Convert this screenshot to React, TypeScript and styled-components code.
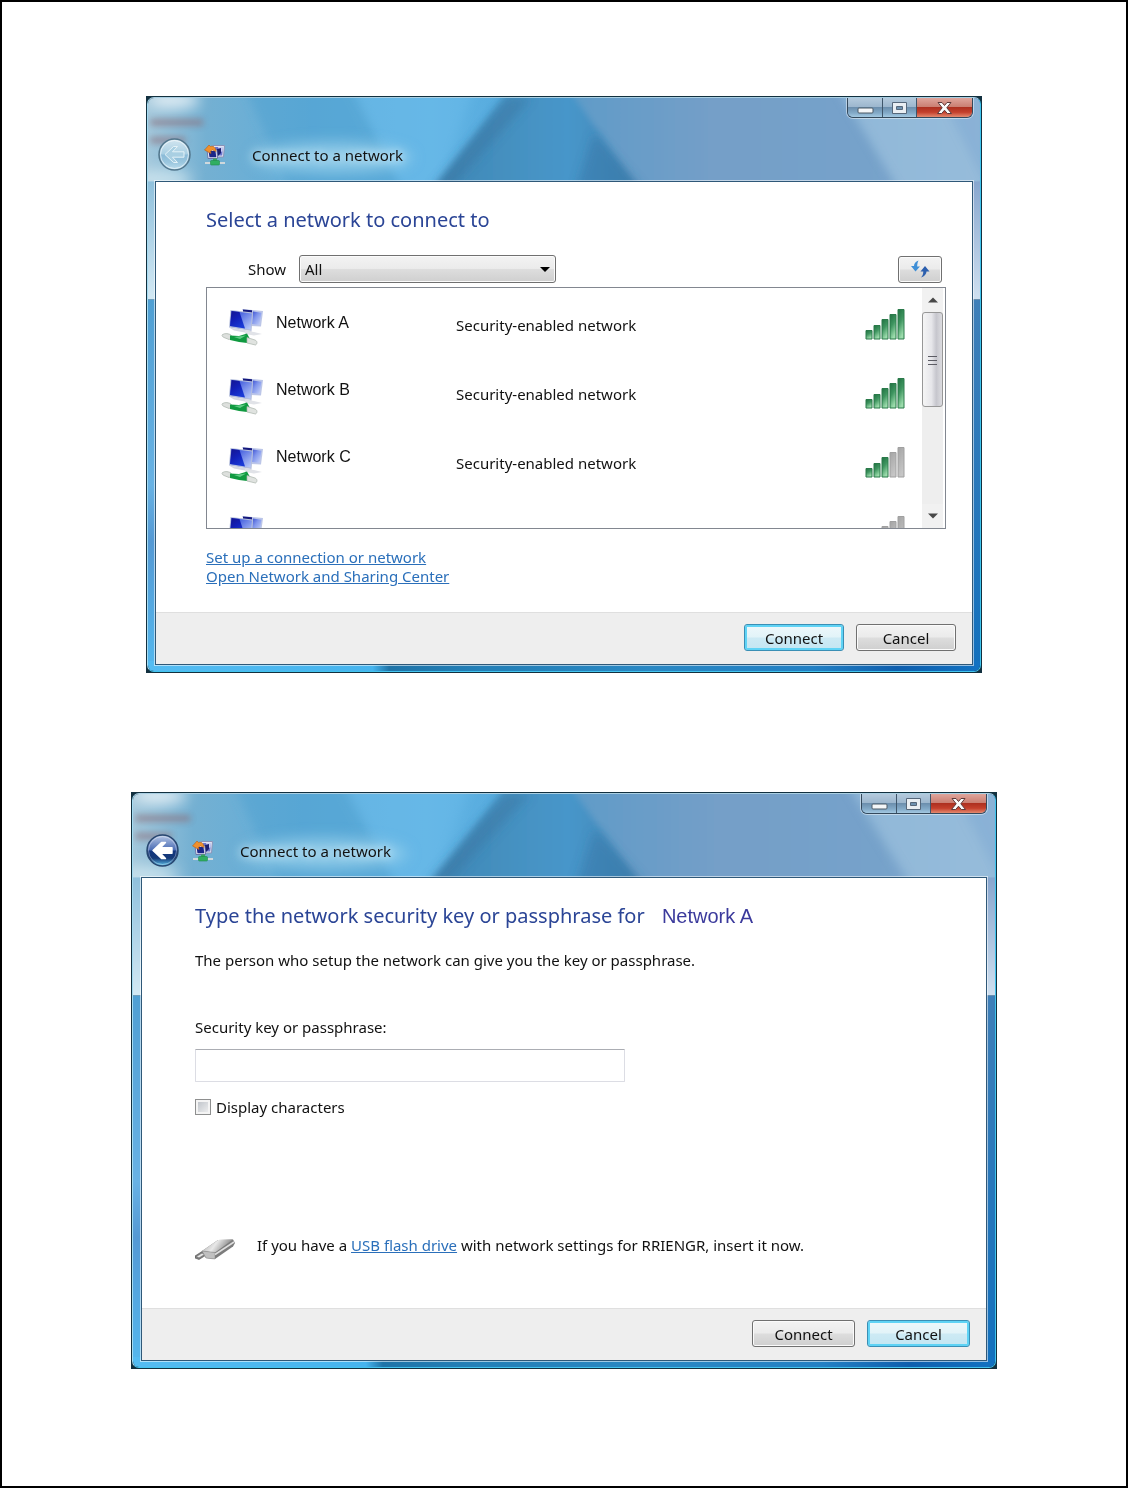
import React, { useState } from "react";
import styled, { createGlobalStyle, css } from "styled-components";

const GlobalStyle = createGlobalStyle`
  *, *::before, *::after { box-sizing: border-box; }
  body { margin: 0; background: #fff; }
`;

const uiFont = `"Noto Sans", "Open Sans", sans-serif`;
const plainFont = `"Liberation Sans", Arial, sans-serif`;

const Page = styled.main`
  min-height: 100vh;
  padding: 94px 24px;
  border: 2px solid #000;
  display: flex;
  flex-direction: column;
  align-items: center;
  gap: 119px;
  font-family: ${uiFont};
  font-size: 15px;
  line-height: 20px;
  color: #111;
`;

/* ---------- window chrome ---------- */

const Frame = styled.section<{ $width: number }>`
  width: 100%;
  max-width: ${(p) => p.$width}px;
  padding: 1px;
  background: #12303f;
`;

const Glass = styled.div<{ $side: number }>`
  position: relative;
  isolation: isolate;
  overflow: hidden;
  border: 1px solid;
  border-color: #a9cfe2 #3ec4ee #43c3ee #a5dcf2;
  border-radius: 7px;
  padding: 0 ${(p) => p.$side}px 6px;
`;

const Art = styled.svg`
  position: absolute;
  inset: 0;
  width: 100%;
  height: 100%;
  z-index: -1;
`;

const Caption = styled.div`
  display: flex;
  justify-content: flex-end;
  height: 20px;
`;

const CaptionGroup = styled.div`
  display: flex;
  border: 1px solid #34495c;
  border-top: 0;
  border-radius: 0 0 6px 6px;
  overflow: hidden;
  box-shadow: 0 0 0 1px rgba(255, 255, 255, 0.45);
`;

const CaptionButton = styled.button<{ $close?: boolean }>`
  display: grid;
  place-items: center;
  width: ${(p) => (p.$close ? 56 : 34)}px;
  padding: 0;
  border: 0;
  border-left: 1px solid #3f566b;
  background: linear-gradient(#b4cadd 0, #9db7ce 45%, #6c8fae 50%, #84abc9 80%, #a4c9e2 100%);
  &:first-child { border-left: 0; }
  ${(p) =>
    p.$close &&
    css`
      background: linear-gradient(#dfa59c 0, #cb8073 45%, #ae3020 50%, #c4402c 75%, #e48a70 100%);
    `}
`;

const NavRow = styled.div<{ $left: number }>`
  display: flex;
  align-items: center;
  padding: 20px 0 10px ${(p) => p.$left}px;
`;

const BackButton = styled.button`
  display: block;
  width: 33px;
  height: 33px;
  padding: 0;
  border: 0;
  border-radius: 50%;
  background: none;
  svg { display: block; }
`;

const AppIcon = styled.svg`
  margin: 0 26px 0 13px;
`;

const Title = styled.h1`
  margin: 0;
  font-size: 15px;
  font-weight: 400;
  line-height: 20px;
  text-shadow: 0 0 8px rgba(255, 255, 255, 0.7), 0 0 12px rgba(255, 255, 255, 0.5);
`;

const Client = styled.div`
  display: flex;
  flex-direction: column;
  height: 484px;
  background: #fff;
  border: 1px solid #2f5878;
  box-shadow: 0 0 0 1px rgba(255, 255, 255, 0.55);
`;

const Content = styled.div<{ $left: number; $right: number }>`
  flex: 1;
  padding: 24px ${(p) => p.$right}px 0 ${(p) => p.$left}px;
`;

const Footer = styled.footer`
  display: flex;
  align-items: center;
  justify-content: flex-end;
  gap: 12px;
  height: 52px;
  padding: 0 16px 2px 0;
  background: #eee;
  border-top: 1px solid #dfdfdf;
`;

const Heading = styled.h2`
  margin: 0;
  font-size: 20px;
  font-weight: 400;
  line-height: 28px;
  color: #2b4596;
`;

const buttonFace = css`
  border: 1px solid #707070;
  border-radius: 3px;
  background: linear-gradient(#f3f3f3 0, #ebebeb 48%, #dddddd 52%, #cfcfcf 100%);
  box-shadow: inset 0 0 0 1px #fbfbfb;
`;

const PushButton = styled.button<{ $default?: boolean; $width: number }>`
  width: ${(p) => p.$width}px;
  height: 27px;
  padding: 0;
  font: inherit;
  color: #111;
  ${buttonFace}
  ${(p) =>
    p.$default &&
    css`
      border-color: #3a8fb5;
      background: linear-gradient(#eef8fb 0, #e2f3f8 48%, #cdeaf4 52%, #c3e6f2 100%);
      box-shadow: inset 0 0 0 2px #5fd3f5;
    `}
`;

const Link = styled.a`
  color: #2a6fba;
  text-decoration: underline;
`;

/* ---------- network list ---------- */

const Toolbar = styled.div`
  display: flex;
  align-items: center;
  padding: 21px 4px 4px 42px;
`;

const ShowLabel = styled.label`
  width: 39px;
`;

const SelectWrap = styled.span`
  position: relative;
  width: 257px;
  margin-left: 12px;
  &::after {
    content: "";
    position: absolute;
    right: 6px;
    top: 12px;
    border: 5px solid transparent;
    border-top-color: #000;
    border-bottom: 0;
    pointer-events: none;
  }
`;

const Select = styled.select`
  display: block;
  appearance: none;
  width: 100%;
  height: 28px;
  padding: 0 5px;
  font: inherit;
  color: #111;
  ${buttonFace}
`;

const RefreshButton = styled.button`
  display: grid;
  place-items: center;
  width: 44px;
  height: 27px;
  margin-left: auto;
  padding: 0;
  ${buttonFace}
`;

const ListBox = styled.div`
  display: flex;
  height: 242px;
  overflow: hidden;
  border: 1px solid #828790;
`;

const Column = styled.ul<{ $pitch: number; $top: number; $width?: number }>`
  display: flex;
  flex-direction: column;
  flex: ${(p) => (p.$width ? `0 0 ${p.$width}px` : "1")};
  margin: 0;
  padding: ${(p) => p.$top}px 0 0;
  list-style: none;
  li {
    flex: 0 0 ${(p) => p.$pitch}px;
  }
  svg { display: block; }
`;

const IconColumn = styled(Column)`
  margin-left: 14px;
`;

const NameColumn = styled(Column)`
  font-family: ${plainFont};
  font-size: 16px;
`;

const ScrollBar = styled.div`
  display: flex;
  flex-direction: column;
  width: 21px;
  margin-right: 2px;
  background: #eeeeee;
`;

const ScrollArrow = styled.button`
  display: grid;
  place-items: center;
  height: 24px;
  padding: 0;
  border: 0;
  background: #f1f1f1;
`;

const ScrollTrack = styled.div`
  flex: 1;
`;

const ScrollThumb = styled.div`
  display: grid;
  place-items: center;
  height: 95px;
  border: 1px solid #979797;
  border-radius: 3px;
  background: linear-gradient(90deg, #f5f5f5 0, #e6e6ea 45%, #c6c6cd 70%, #dcdce0 100%);
`;

const LinkList = styled.nav`
  display: flex;
  flex-direction: column;
  align-items: flex-start;
  padding-top: 19px;
  line-height: 19px;
`;

/* ---------- passphrase form ---------- */

const NetworkName = styled.span`
  margin-left: 12px;
  font-family: ${plainFont};
  color: #3b3a9c;
`;

const Hint = styled.p`
  margin: 20px 0 0;
`;

const Field = styled.div`
  display: flex;
  flex-direction: column;
  gap: 12px;
  max-width: 430px;
  margin-top: 47px;
`;

const TextBox = styled.input`
  width: 100%;
  height: 33px;
  padding: 0 8px;
  font: inherit;
  background: #fff;
  border: 1px solid #dcdde4;
  border-top-color: #abadb3;
  border-radius: 1px;
`;

const CheckRow = styled.label`
  display: flex;
  align-items: center;
  gap: 5px;
  margin-top: 15px;
`;

const CheckBox = styled.input`
  appearance: none;
  width: 16px;
  height: 16px;
  margin: 0;
  border: 1px solid #8e8f8f;
  background: linear-gradient(135deg, #b9bec5, #f4f4f4);
  box-shadow: inset 0 0 0 2px #f4f4f4;
  &:checked { background: #3c6ea8; }
`;

const DriveRow = styled.div`
  display: flex;
  align-items: center;
  gap: 21px;
  margin-top: 112px;
`;

const DriveText = styled.p`
  margin: 0;
`;

/* ---------- drawings ---------- */

function GlassArt({ id }: { id: string }) {
  const u = (n: string) => `url(#${id}-${n})`;
  return (
    <Art viewBox="0 0 836 577" preserveAspectRatio="none" aria-hidden="true">
      <defs>
        <linearGradient id={`${id}-base`}>
          <stop offset="0" stopColor="#a3c8dc" />
          <stop offset="0.07" stopColor="#74b0d2" />
          <stop offset="0.2" stopColor="#5fadda" />
          <stop offset="0.34" stopColor="#62b4e4" />
          <stop offset="0.44" stopColor="#55aadd" />
        </linearGradient>
        <linearGradient id={`${id}-mid`}>
          <stop offset="0" stopColor="#3f86b4" />
          <stop offset="0.4" stopColor="#4591c1" />
          <stop offset="0.65" stopColor="#4796ca" />
          <stop offset="1" stopColor="#4486b2" />
        </linearGradient>
        <linearGradient id={`${id}-right`}>
          <stop offset="0" stopColor="#5f9bc8" />
          <stop offset="0.35" stopColor="#759fc8" />
          <stop offset="0.7" stopColor="#76a2ca" />
          <stop offset="1" stopColor="#86acd0" />
        </linearGradient>
        <linearGradient id={`${id}-left-side`} x2="0" y2="1">
          <stop offset="0" stopColor="#8fc0dc" />
          <stop offset="1" stopColor="#d3e9f4" />
        </linearGradient>
        <linearGradient id={`${id}-right-side`} x2="0" y2="1">
          <stop offset="0" stopColor="#88a6ce" />
          <stop offset="1" stopColor="#cfe0f0" />
        </linearGradient>
        <linearGradient id={`${id}-left-low`} x2="0" y2="1">
          <stop offset="0" stopColor="#4f9fd3" />
          <stop offset="0.5" stopColor="#68b2e4" />
          <stop offset="0.65" stopColor="#5499d4" />
          <stop offset="1" stopColor="#54b8ee" />
        </linearGradient>
        <linearGradient id={`${id}-right-low`} x2="0" y2="1">
          <stop offset="0" stopColor="#3f7fb8" />
          <stop offset="1" stopColor="#1270bd" />
        </linearGradient>
        <linearGradient id={`${id}-bottom`}>
          <stop offset="0" stopColor="#54bcf2" />
          <stop offset="0.27" stopColor="#46b4ee" />
          <stop offset="0.29" stopColor="#1f74a8" />
          <stop offset="0.4" stopColor="#2480b8" />
          <stop offset="0.43" stopColor="#2480b8" />
          <stop offset="0.6" stopColor="#2a88c4" />
          <stop offset="0.8" stopColor="#2380c4" />
          <stop offset="0.9" stopColor="#0f5fae" />
          <stop offset="1" stopColor="#1272c2" />
        </linearGradient>
        <filter id={`${id}-soft`} x="-40%" y="-60%" width="180%" height="220%">
          <feGaussianBlur stdDeviation="7" />
        </filter>
        <filter id={`${id}-smudge`} x="-40%" y="-60%" width="180%" height="220%">
          <feGaussianBlur stdDeviation="3" />
        </filter>
        <filter id={`${id}-haze`} x="-10%" y="-10%" width="120%" height="120%">
          <feGaussianBlur stdDeviation="5" />
        </filter>
        <filter id={`${id}-edge`} x="-5%" y="-5%" width="110%" height="110%">
          <feGaussianBlur stdDeviation="3" />
        </filter>
      </defs>
      <rect width="836" height="90" fill={u("base")} />
      <g filter={u("haze")}>
        <path d="M95 -15H200L262 105H150Z" fill="#4f9fd0" opacity="0.5" />
        <path d="M205 -15H330L285 105H262Z" fill="#6cbcea" opacity="0.45" />
      </g>
      <g filter={u("edge")}>
        <path d="M362 -8H424L498 98H282Z" fill={u("mid")} />
        <path d="M424 -8H850V98H498Z" fill={u("right")} />
      </g>
      <g filter={u("haze")}>
        <path d="M690 -15H870V105H762Z" fill="#a0c4e0" opacity="0.65" />
        <path d="M790 -15H870V105H850Z" fill="#7da7d2" opacity="0.5" />
        <path d="M362 0L285 90H305L385 0Z" fill="#356f9c" opacity="0.4" />
        <path d="M448 35L498 92H430Z" fill="#2f6f9f" opacity="0.4" />
      </g>
      <g filter={u("soft")}>
        <ellipse cx="26" cy="2" rx="26" ry="8" fill="#fff" opacity="0.75" />
        <ellipse cx="185" cy="60" rx="80" ry="16" fill="#a9dcf2" opacity="0.6" />
        <ellipse cx="14" cy="82" rx="30" ry="10" fill="#d9ecf4" opacity="0.7" />
      </g>
      <g filter={u("smudge")} fill="#8d6f7c" opacity="0.6">
        <rect x="2" y="21" width="54" height="7" rx="3" />
        <rect x="2" y="39" width="36" height="7" rx="3" />
      </g>
      <rect y="84" width="20" height="119" fill={u("left-side")} />
      <rect y="203" width="20" height="374" fill={u("left-low")} />
      <rect x="816" y="84" width="20" height="119" fill={u("right-side")} />
      <rect x="816" y="203" width="20" height="374" fill={u("right-low")} />
      <rect y="567" width="836" height="10" fill={u("bottom")} />
    </Art>
  );
}

function MinimizeGlyph() {
  return (
    <svg width="17" height="14" viewBox="0 0 17 14" aria-hidden="true">
      <rect x="1" y="7" width="15" height="5" rx="1" fill="#f4f6f8" stroke="#4d5a66" />
    </svg>
  );
}

function MaximizeGlyph() {
  return (
    <svg width="17" height="14" viewBox="0 0 17 14" aria-hidden="true">
      <path fillRule="evenodd" d="M1.500 1.500H15.500V12.500H1.500ZM5.500 5.500V8.500H11.500V5.500Z" fill="#e9eef3" stroke="#56677a" />
    </svg>
  );
}

function CloseGlyph() {
  return (
    <svg width="17" height="14" viewBox="0 0 17 14" aria-hidden="true">
      <path
        d="M2 1.500H6L8.500 4.500L11 1.500H15L10.800 6.800L15.500 12.500H11.300L8.500 9.200L5.700 12.500H1.500L6.200 6.800Z"
        fill="#fbfbfb"
        stroke="#5e3a3a"
      />
    </svg>
  );
}

function BackGlyph({ id, active }: { id: string; active: boolean }) {
  return (
    <svg width="33" height="33" viewBox="0 0 33 33" aria-hidden="true">
      <defs>
        <linearGradient id={`${id}-top`} x2="0" y2="1">
          <stop offset="0" stopColor={active ? "#b9c9e6" : "#d3e6f0"} />
          <stop offset="0.48" stopColor={active ? "#4a6cb4" : "#a9cfe3"} />
          <stop offset="0.52" stopColor={active ? "#12357e" : "#8bbbd8"} />
          <stop offset="0.75" stopColor={active ? "#153a78" : "#9ac6de"} />
          <stop offset="1" stopColor={active ? "#5cc3ee" : "#bfdfee"} />
        </linearGradient>
      </defs>
      <circle cx="16.500" cy="16.500" r="15.500" fill={`url(#${id}-top)`} stroke={active ? "#27466f" : "#52768c"} strokeWidth="1.500" />
      <circle cx="16.500" cy="16.500" r="14" fill="none" stroke="#fff" strokeOpacity={active ? 0.35 : 0.6} />
      <path
        d="M7 16.500L15.500 8.500H19.500L14.500 13.800H26V19.200H14.500L19.500 24.500H15.500Z"
        fill={active ? "#fff" : "#a9cfe2"}
        stroke={active ? "#fff" : "#e4f2f8"}
        strokeWidth={active ? 1.4 : 1}
        strokeLinejoin="round"
      />
    </svg>
  );
}

function ConnectIcon() {
  return (
    <AppIcon width="22" height="22" viewBox="0 0 22 22" aria-hidden="true">
      <path d="M9 1.500H20.500L19.500 13H10Z" fill="#dfe3f2" stroke="#8b93b8" />
      <path d="M11 3H19L18.200 11.500H11Z" fill="#6b74cc" />
      <path d="M14 3H19L18.600 7.500L15 8Z" fill="#c9cdf2" />
      <path d="M3 5.500H13L13.500 14.500H4Z" fill="#e8eaf4" stroke="#6c74a8" />
      <path d="M4.500 7H11.500L12.300 13.200H5.500Z" fill="#1c2688" />
      <path d="M13 5L17 4V9L14 12Z" fill="#1c2170" />
      <path d="M0.500 6L5 1L6.500 2.500C9.500 1.500 12 4 12 7.500L8.500 6L6.500 7L7 9.500Z" fill="#f0902c" stroke="#b55f18" strokeWidth="0.600" />
      <path d="M9 14.500H13V17H9Z" fill="#3aa85e" />
      <path d="M1 19H21" stroke="#cfd8dc" strokeWidth="2" />
      <rect x="6.500" y="16.500" width="9" height="4.500" rx="1" fill="#2fae62" stroke="#1f8a4a" strokeWidth="0.600" />
    </AppIcon>
  );
}

function ComputersIcon() {
  return (
    <svg width="44" height="38" viewBox="0 0 44 38" aria-hidden="true">
      <defs>
        <linearGradient id="screen-front" x1="0" y1="0" x2="1" y2="1">
          <stop offset="0.3" stopColor="#4c66e0" />
          <stop offset="1" stopColor="#c4d3fa" />
        </linearGradient>
        <linearGradient id="screen-shade" x1="0" y1="0" x2="0.600" y2="1">
          <stop offset="0" stopColor="#14148c" />
          <stop offset="0.5" stopColor="#1220b8" />
          <stop offset="1" stopColor="#1a3ad6" />
        </linearGradient>
        <linearGradient id="screen-back" x1="0" y1="0" x2="1" y2="1">
          <stop offset="0" stopColor="#3b50d0" />
          <stop offset="0.4" stopColor="#8095ec" />
          <stop offset="1" stopColor="#cdd8fa" />
        </linearGradient>
      </defs>
      <path d="M21 0L42 2L40 17.500L30 17Z" fill="#bcc6e8" />
      <path d="M22 0.500L31 1.200V4L22 3Z" fill="#15187c" />
      <path d="M32 2.500L40.500 3.800L38.500 16L31 15Z" fill="url(#screen-back)" />
      <path d="M9.500 1L32 3.500L30.500 22L8 18.500Z" fill="#b4bedc" />
      <path d="M10.500 2L31 4.500L29.500 20.500L9 17Z" fill="url(#screen-front)" />
      <path d="M10.500 2L18.500 3L24 19.600L9 17Z" fill="url(#screen-shade)" />
      <path d="M8 18.500L30 22L32 23.500L29 24.500L13 21.500Z" fill="#d6d9e2" />
      <path d="M24 22L33 23L41 25L33 26.500L24 25Z" fill="#e1e3e8" />
      <path d="M1.500 25.500C4 24 8 24.500 10 26L12 29L8 30.500L3 28.500C1 27.500 0.500 26.500 1.500 25.500Z" fill="#dde0dd" stroke="#a9b3ab" strokeWidth="0.700" />
      <path d="M9 26.500L18 27L26 24.500L29 30L26 34L18 33L9 31Z" fill="#109a40" />
      <path d="M13 28L25 26.500L19 30Z" fill="#5fcb84" />
      <path d="M26 28.500L34 31C36.500 32 36.500 35 34.500 36L26 34Z" fill="#e0e3e0" stroke="#a9b3ab" strokeWidth="0.700" />
    </svg>
  );
}

function SignalIcon({ level }: { level: number }) {
  const bars = [9, 14, 20, 25, 30];
  return (
    <svg width="40" height="31" viewBox="0 0 40 31" role="img" aria-label={`Signal ${level} of 5`}>
      <defs>
        <linearGradient id="bar-on" x1="0" y1="0" x2="0.400" y2="1">
          <stop offset="0" stopColor="#1f7040" />
          <stop offset="0.5" stopColor="#3f9560" />
          <stop offset="1" stopColor="#9cdcac" />
        </linearGradient>
        <linearGradient id="bar-off" x1="0" y1="0" x2="0.400" y2="1">
          <stop offset="0" stopColor="#a4a4a4" />
          <stop offset="1" stopColor="#c6c6c6" />
        </linearGradient>
      </defs>
      {bars.map((h, i) => (
        <path
          key={h}
          d={`M${i * 8 + 1} ${30.5 - h}h6v${h - 0.5}h-6z`}
          fill={i < level ? "url(#bar-on)" : "url(#bar-off)"}
          stroke={i < level ? "#2a7a4a" : "#a0a0a0"}
        />
      ))}
    </svg>
  );
}

function RefreshGlyph() {
  return (
    <svg width="20" height="18" viewBox="0 0 20 18" aria-hidden="true">
      <path d="M8.500 0.500C5.500 1.500 4 3.500 4 6H1L5.500 11.500L10 6.500H7.200C7.200 4.500 7.500 2.500 8.500 0.500Z" fill="#3f8fd6" />
      <path d="M11 17.500C14.500 16.500 16.500 14 16.500 11.500H19.500L15 6L10.500 11.500H13.300C13.300 14 12.500 16 11 17.500Z" fill="#2c5fae" />
    </svg>
  );
}

function Chevron({ up }: { up?: boolean }) {
  return (
    <svg width="10" height="6" viewBox="0 0 10 6" aria-hidden="true">
      <path d={up ? "M0 5.500L5 0.500L10 5.500Z" : "M0 0.500H10L5 5.500Z"} fill="#484848" />
    </svg>
  );
}

function GripGlyph() {
  return (
    <svg width="9" height="10" viewBox="0 0 9 10" aria-hidden="true">
      <path d="M0 1.500H9M0 5.500H9M0 9.500H9" stroke="#5c5c64" />
    </svg>
  );
}

function DriveIcon() {
  return (
    <svg width="41" height="32" viewBox="0 -10 41 32" aria-hidden="true">
      <defs>
        <linearGradient id="drive-top" x1="0" y1="0" x2="1" y2="0.300">
          <stop offset="0" stopColor="#a4a4a4" />
          <stop offset="0.5" stopColor="#e8e8e8" />
          <stop offset="1" stopColor="#7c7c7c" />
        </linearGradient>
      </defs>
      <path d="M0 17L7 12.500L12 15.500L4 20.500L0 19Z" fill="#7e7e7e" stroke="#505050" strokeWidth="0.600" />
      <path d="M2 17.500L7 14.500L9 15.500L4 18.500Z" fill="#e6e6e6" />
      <path d="M7 12L23 1L38 0.500L40 4L38 7.500L20 20L11 19Z" fill="#7c7c7c" />
      <path d="M7 12L23 1L38 0.500L20 13.500Z" fill="url(#drive-top)" />
      <path d="M7 12L20 13.500L20 20L11 19Z" fill="#c0c0c0" stroke="#848484" strokeWidth="0.500" />
      <path d="M20 15.500L39 3" stroke="#dedede" strokeWidth="1.500" />
    </svg>
  );
}

/* ---------- windows ---------- */

type WizardProps = {
  id: string;
  width: number;
  side: number;
  navLeft: number;
  canGoBack: boolean;
  children: React.ReactNode;
};

function WizardWindow({ id, width, side, navLeft, canGoBack, children }: WizardProps) {
  return (
    <Frame $width={width}>
      <Glass $side={side}>
        <GlassArt id={id} />
        <Caption>
          <CaptionGroup>
            <CaptionButton aria-label="Minimize"><MinimizeGlyph /></CaptionButton>
            <CaptionButton aria-label="Maximize"><MaximizeGlyph /></CaptionButton>
            <CaptionButton $close aria-label="Close"><CloseGlyph /></CaptionButton>
          </CaptionGroup>
        </Caption>
        <NavRow $left={navLeft}>
          <BackButton aria-label="Back" disabled={!canGoBack}>
            <BackGlyph id={`${id}-back`} active={canGoBack} />
          </BackButton>
          <ConnectIcon />
          <Title>Connect to a network</Title>
        </NavRow>
        <Client>{children}</Client>
      </Glass>
    </Frame>
  );
}

const networks = [
  { name: "Network A", status: "Security-enabled network", level: 5 },
  { name: "Network B", status: "Security-enabled network", level: 5 },
  { name: "Network C", status: "Security-enabled network", level: 3 },
  { name: "", status: "", level: 0 },
];

function SelectNetworkWindow() {
  const named = networks.filter((n) => n.name);
  return (
    <WizardWindow id="select" width={836} side={7} navLeft={3} canGoBack={false}>
      <Content $left={50} $right={26}>
        <Heading>Select a network to connect to</Heading>
        <Toolbar>
          <ShowLabel htmlFor="show">Show</ShowLabel>
          <SelectWrap>
            <Select id="show" defaultValue="All">
              <option>All</option>
            </Select>
          </SelectWrap>
          <RefreshButton aria-label="Refresh"><RefreshGlyph /></RefreshButton>
        </Toolbar>
        <ListBox>
          <IconColumn $pitch={69} $top={21} $width={55}>
            {networks.map((n, i) => (
              <li key={i}><ComputersIcon /></li>
            ))}
          </IconColumn>
          <NameColumn $pitch={67} $top={25} $width={180}>
            {named.map((n) => (
              <li key={n.name}>{n.name}</li>
            ))}
          </NameColumn>
          <Column $pitch={69} $top={27}>
            {named.map((n) => (
              <li key={n.name}>{n.status}</li>
            ))}
          </Column>
          <Column $pitch={69} $top={21} $width={57}>
            {networks.map((n, i) => (
              <li key={i}><SignalIcon level={n.level} /></li>
            ))}
          </Column>
          <ScrollBar>
            <ScrollArrow aria-label="Scroll up"><Chevron up /></ScrollArrow>
            <ScrollTrack>
              <ScrollThumb><GripGlyph /></ScrollThumb>
            </ScrollTrack>
            <ScrollArrow aria-label="Scroll down"><Chevron /></ScrollArrow>
          </ScrollBar>
        </ListBox>
        <LinkList>
          <Link href="#setup">Set up a connection or network</Link>
          <Link href="#center">Open Network and Sharing Center</Link>
        </LinkList>
      </Content>
      <Footer>
        <PushButton $default $width={100}>Connect</PushButton>
        <PushButton $width={100}>Cancel</PushButton>
      </Footer>
    </WizardWindow>
  );
}

function PassphraseWindow() {
  const [visible, setVisible] = useState(false);
  return (
    <WizardWindow id="key" width={866} side={8} navLeft={5} canGoBack>
      <Content $left={53} $right={53}>
        <Heading>
          Type the network security key or passphrase for <NetworkName>Network A</NetworkName>
        </Heading>
        <Hint>The person who setup the network can give you the key or passphrase.</Hint>
        <Field>
          <label htmlFor="passphrase">Security key or passphrase:</label>
          <TextBox id="passphrase" type={visible ? "text" : "password"} />
        </Field>
        <CheckRow>
          <CheckBox type="checkbox" checked={visible} onChange={(e) => setVisible(e.target.checked)} />
          Display characters
        </CheckRow>
        <DriveRow>
          <DriveIcon />
          <DriveText>
            If you have a <Link href="#usb">USB flash drive</Link> with network settings for RRIENGR, insert it now.
          </DriveText>
        </DriveRow>
      </Content>
      <Footer>
        <PushButton $width={103}>Connect</PushButton>
        <PushButton $default $width={103}>Cancel</PushButton>
      </Footer>
    </WizardWindow>
  );
}

export default function App() {
  return (
    <>
      <GlobalStyle />
      <Page>
        <SelectNetworkWindow />
        <PassphraseWindow />
      </Page>
    </>
  );
}
